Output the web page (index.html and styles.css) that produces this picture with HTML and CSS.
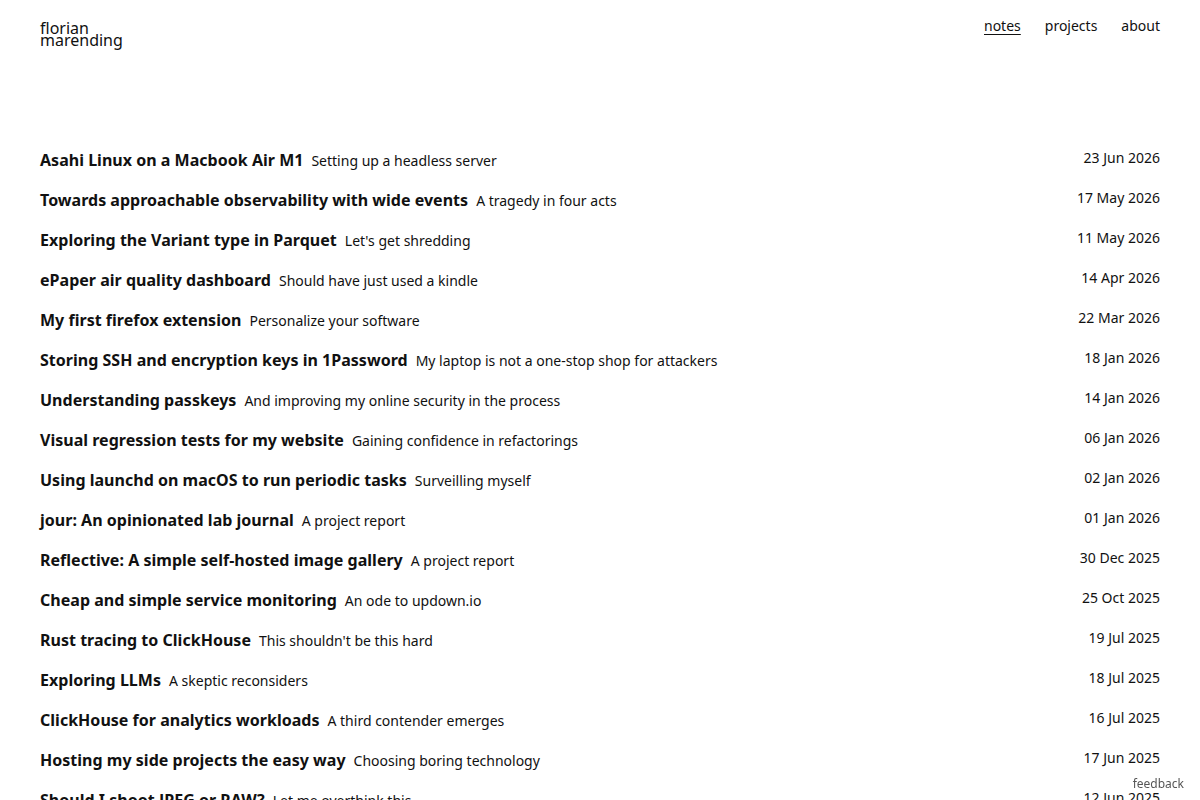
FILE: index.html
```html
<!DOCTYPE html>
<html lang="en">
<head>
<meta charset="utf-8">
<title>florian marending</title>
<link rel="stylesheet" href="styles.css">
</head>
<body>
<header class="site-header">
  <a class="logo" href="#">florian<br>marending</a>
  <nav class="nav">
    <a class="nav-link active" href="#">notes</a>
    <a class="nav-link" href="#">projects</a>
    <a class="nav-link" href="#">about</a>
  </nav>
</header>
<main class="notes">
  <ul class="note-list">
    <li class="note"><a class="note-link" href="#"><span class="note-title">Asahi Linux on a Macbook Air M1</span><span class="note-sub">Setting up a headless server</span></a><span class="note-date">23 Jun 2026</span></li>
    <li class="note"><a class="note-link" href="#"><span class="note-title">Towards approachable observability with wide events</span><span class="note-sub">A tragedy in four acts</span></a><span class="note-date">17 May 2026</span></li>
    <li class="note"><a class="note-link" href="#"><span class="note-title">Exploring the Variant type in Parquet</span><span class="note-sub">Let's get shredding</span></a><span class="note-date">11 May 2026</span></li>
    <li class="note"><a class="note-link" href="#"><span class="note-title">ePaper air quality dashboard</span><span class="note-sub">Should have just used a kindle</span></a><span class="note-date">14 Apr 2026</span></li>
    <li class="note"><a class="note-link" href="#"><span class="note-title">My first firefox extension</span><span class="note-sub">Personalize your software</span></a><span class="note-date">22 Mar 2026</span></li>
    <li class="note"><a class="note-link" href="#"><span class="note-title">Storing SSH and encryption keys in 1Password</span><span class="note-sub">My laptop is not a one-stop shop for attackers</span></a><span class="note-date">18 Jan 2026</span></li>
    <li class="note"><a class="note-link" href="#"><span class="note-title">Understanding passkeys</span><span class="note-sub">And improving my online security in the process</span></a><span class="note-date">14 Jan 2026</span></li>
    <li class="note"><a class="note-link" href="#"><span class="note-title">Visual regression tests for my website</span><span class="note-sub">Gaining confidence in refactorings</span></a><span class="note-date">06 Jan 2026</span></li>
    <li class="note"><a class="note-link" href="#"><span class="note-title">Using launchd on macOS to run periodic tasks</span><span class="note-sub">Surveilling myself</span></a><span class="note-date">02 Jan 2026</span></li>
    <li class="note"><a class="note-link" href="#"><span class="note-title">jour: An opinionated lab journal</span><span class="note-sub">A project report</span></a><span class="note-date">01 Jan 2026</span></li>
    <li class="note"><a class="note-link" href="#"><span class="note-title">Reflective: A simple self-hosted image gallery</span><span class="note-sub">A project report</span></a><span class="note-date">30 Dec 2025</span></li>
    <li class="note"><a class="note-link" href="#"><span class="note-title">Cheap and simple service monitoring</span><span class="note-sub">An ode to updown.io</span></a><span class="note-date">25 Oct 2025</span></li>
    <li class="note"><a class="note-link" href="#"><span class="note-title">Rust tracing to ClickHouse</span><span class="note-sub">This shouldn't be this hard</span></a><span class="note-date">19 Jul 2025</span></li>
    <li class="note"><a class="note-link" href="#"><span class="note-title">Exploring LLMs</span><span class="note-sub">A skeptic reconsiders</span></a><span class="note-date">18 Jul 2025</span></li>
    <li class="note"><a class="note-link" href="#"><span class="note-title">ClickHouse for analytics workloads</span><span class="note-sub">A third contender emerges</span></a><span class="note-date">16 Jul 2025</span></li>
    <li class="note"><a class="note-link" href="#"><span class="note-title">Hosting my side projects the easy way</span><span class="note-sub">Choosing boring technology</span></a><span class="note-date">17 Jun 2025</span></li>
    <li class="note"><a class="note-link" href="#"><span class="note-title">Should I shoot JPEG or RAW?</span><span class="note-sub">Let me overthink this</span></a><span class="note-date">12 Jun 2025</span></li>
  </ul>
</main>
<a class="feedback" href="#">feedback</a>
</body>
</html>
```

FILE: styles.css
```css
* { box-sizing: border-box; }
html, body { margin: 0; padding: 0; }
body {
  font-family: "Noto Sans", "Open Sans", sans-serif;
  color: #111;
  background: #fff;
  padding: 0 40px;
}
a { color: inherit; text-decoration: none; }

.site-header {
  display: flex;
  justify-content: space-between;
  align-items: flex-start;
  padding-top: 20px;
  height: 148px;
}
.logo {
  font-size: 16px;
  line-height: 12px;
  padding-top: 2px;
}
.nav {
  display: flex;
  gap: 24px;
  font-size: 14px;
  line-height: 12px;
}
.nav-link.active { text-decoration: underline; text-underline-offset: 3px; }

.note-list { list-style: none; margin: 0; padding: 0; }
.note {
  display: flex;
  justify-content: space-between;
  align-items: flex-start;
  height: 40px;
}
.note-link { display: flex; align-items: baseline; gap: 8px; line-height: 24px; }
.note-title { font-size: 16px; font-weight: 700; letter-spacing: 0.02px; }
.note-sub { font-size: 14px; }
.note-date { font-size: 14px; line-height: 20px; }

.feedback {
  position: fixed;
  right: 16px;
  bottom: 8px;
  font-size: 12px;
  color: #555;
}
```
